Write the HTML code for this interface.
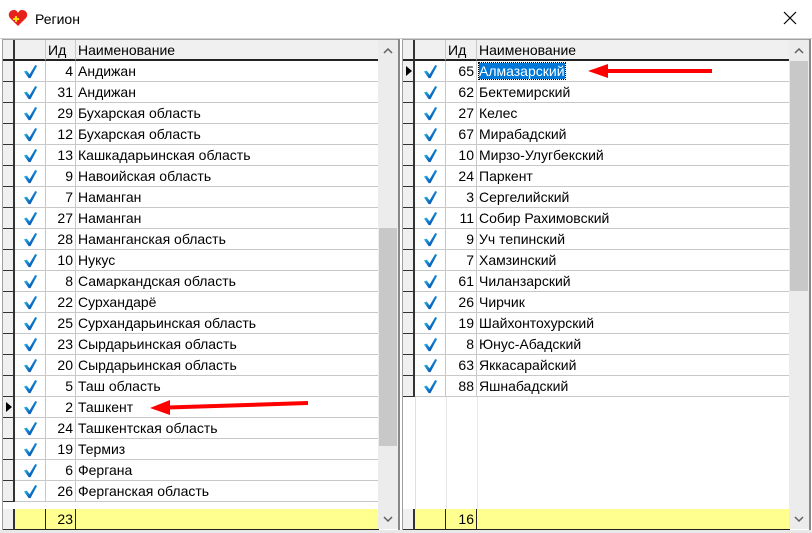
<!DOCTYPE html><html><head><meta charset="utf-8"><style>
body{margin:0;width:812px;height:533px;background:#fff;position:relative;overflow:hidden;font-family:"Liberation Sans",Arial,sans-serif;font-size:14px;color:#000}
.a{position:absolute}
.g{position:absolute;top:39px;height:491px;background:#fff;border-left:1px solid #a0a0a0;border-top:1px solid #a0a0a0}
.r{position:absolute;left:0;height:21px;display:flex}
.r>div{box-sizing:border-box;height:21px;line-height:21px;border-right:1px solid #c8c8c8;border-bottom:1px solid #c8c8c8;white-space:nowrap;overflow:hidden}
.r>.i{width:12px;background:#f0f0f0;border-right:2px solid #333;border-bottom:1px solid #333;position:relative}
.r>.c{width:31px;position:relative}
.r>.d{width:30px;text-align:right;padding-right:2px}
.r>.n{padding-left:2px}
.h>div{background:#f0f0f0;border-bottom:2px solid #222;line-height:20px}
.h>.d{text-align:left;padding-left:2px}
.f>div{background:#ffff90;border-bottom:1px solid #222;border-right:1px solid #222}
.sb{position:absolute;width:20px;background:#ececec;top:40px;height:489px}
.th{position:absolute;left:1px;width:18px;background:#c8c8c8}
.chk{position:absolute;left:8px;top:3px}
.tri{position:absolute;left:3px;top:5px;width:0;height:0;border-left:6px solid #000;border-top:5px solid transparent;border-bottom:5px solid transparent}
</style></head><body>
<svg class="a" style="left:8px;top:9px" width="20" height="18" viewBox="0 0 20 18"><path d="M10 17 L2 9 C-1 5 2 1 6 1 C8 1 9 2 10 4 C11 2 12 1 14 1 C18 1 21 5 18 9 Z" fill="#e8201c"/><path d="M5 10h6M8 7v6" stroke="#ffe000" stroke-width="2"/></svg>
<div class="a" style="left:35px;top:11px;font-size:14px">Регион</div>
<svg class="a" style="left:783px;top:11px" width="14" height="14"><path d="M1 1L13 13M13 1L1 13" stroke="#000" stroke-width="1.2"/></svg>
<div class="a" style="left:0;top:38px;width:812px;height:1px;background:#d0d0d0"></div>

<svg width="0" height="0" style="position:absolute"><defs><linearGradient id="cg" x1="0" y1="0" x2="1" y2="1"><stop offset="0" stop-color="#50e0f8"/><stop offset="0.5" stop-color="#1080d0"/><stop offset="1" stop-color="#082c90"/></linearGradient><symbol id="ck" viewBox="0 0 16 16"><path d="M1 8 L4 7 L7 11 L13 1 L15 2 L8 15 L6 15 Z" fill="url(#cg)"/></symbol></defs></svg>

<!-- LEFT GRID -->
<div class="g" style="left:2px;width:396px">
<div class="r h" style="top:0"><div class="i" style="border-bottom:2px solid #222"></div><div class="c"></div><div class="d">Ид</div><div class="n" style="width:303px">Наименование</div></div>
<div class="r" style="top:21px"><div class="i"></div><div class="c"><svg class="chk" width="15" height="15"><use href="#ck"/></svg></div><div class="d">4</div><div class="n" style="width:303px">Андижан</div></div>
<div class="r" style="top:42px"><div class="i"></div><div class="c"><svg class="chk" width="15" height="15"><use href="#ck"/></svg></div><div class="d">31</div><div class="n" style="width:303px">Андижан</div></div>
<div class="r" style="top:63px"><div class="i"></div><div class="c"><svg class="chk" width="15" height="15"><use href="#ck"/></svg></div><div class="d">29</div><div class="n" style="width:303px">Бухарская область</div></div>
<div class="r" style="top:84px"><div class="i"></div><div class="c"><svg class="chk" width="15" height="15"><use href="#ck"/></svg></div><div class="d">12</div><div class="n" style="width:303px">Бухарская область</div></div>
<div class="r" style="top:105px"><div class="i"></div><div class="c"><svg class="chk" width="15" height="15"><use href="#ck"/></svg></div><div class="d">13</div><div class="n" style="width:303px">Кашкадарьинская область</div></div>
<div class="r" style="top:126px"><div class="i"></div><div class="c"><svg class="chk" width="15" height="15"><use href="#ck"/></svg></div><div class="d">9</div><div class="n" style="width:303px">Навоийская область</div></div>
<div class="r" style="top:147px"><div class="i"></div><div class="c"><svg class="chk" width="15" height="15"><use href="#ck"/></svg></div><div class="d">7</div><div class="n" style="width:303px">Наманган</div></div>
<div class="r" style="top:168px"><div class="i"></div><div class="c"><svg class="chk" width="15" height="15"><use href="#ck"/></svg></div><div class="d">27</div><div class="n" style="width:303px">Наманган</div></div>
<div class="r" style="top:189px"><div class="i"></div><div class="c"><svg class="chk" width="15" height="15"><use href="#ck"/></svg></div><div class="d">28</div><div class="n" style="width:303px">Наманганская область</div></div>
<div class="r" style="top:210px"><div class="i"></div><div class="c"><svg class="chk" width="15" height="15"><use href="#ck"/></svg></div><div class="d">10</div><div class="n" style="width:303px">Нукус</div></div>
<div class="r" style="top:231px"><div class="i"></div><div class="c"><svg class="chk" width="15" height="15"><use href="#ck"/></svg></div><div class="d">8</div><div class="n" style="width:303px">Самаркандская область</div></div>
<div class="r" style="top:252px"><div class="i"></div><div class="c"><svg class="chk" width="15" height="15"><use href="#ck"/></svg></div><div class="d">22</div><div class="n" style="width:303px">Сурхандарё</div></div>
<div class="r" style="top:273px"><div class="i"></div><div class="c"><svg class="chk" width="15" height="15"><use href="#ck"/></svg></div><div class="d">25</div><div class="n" style="width:303px">Сурхандарьинская область</div></div>
<div class="r" style="top:294px"><div class="i"></div><div class="c"><svg class="chk" width="15" height="15"><use href="#ck"/></svg></div><div class="d">23</div><div class="n" style="width:303px">Сырдарьинская область</div></div>
<div class="r" style="top:315px"><div class="i"></div><div class="c"><svg class="chk" width="15" height="15"><use href="#ck"/></svg></div><div class="d">20</div><div class="n" style="width:303px">Сырдарьинская область</div></div>
<div class="r" style="top:336px"><div class="i"></div><div class="c"><svg class="chk" width="15" height="15"><use href="#ck"/></svg></div><div class="d">5</div><div class="n" style="width:303px">Таш область</div></div>
<div class="r" style="top:357px"><div class="i"><div class="tri"></div></div><div class="c"><svg class="chk" width="15" height="15"><use href="#ck"/></svg></div><div class="d">2</div><div class="n" style="width:303px">Ташкент</div></div>
<div class="r" style="top:378px"><div class="i"></div><div class="c"><svg class="chk" width="15" height="15"><use href="#ck"/></svg></div><div class="d">24</div><div class="n" style="width:303px">Ташкентская область</div></div>
<div class="r" style="top:399px"><div class="i"></div><div class="c"><svg class="chk" width="15" height="15"><use href="#ck"/></svg></div><div class="d">19</div><div class="n" style="width:303px">Термиз</div></div>
<div class="r" style="top:420px"><div class="i"></div><div class="c"><svg class="chk" width="15" height="15"><use href="#ck"/></svg></div><div class="d">6</div><div class="n" style="width:303px">Фергана</div></div>
<div class="r" style="top:441px"><div class="i"></div><div class="c"><svg class="chk" width="15" height="15"><use href="#ck"/></svg></div><div class="d">26</div><div class="n" style="width:303px">Ферганская область</div></div>
<div class="r f" style="top:469px"><div class="i" style="background:#f0f0f0"></div><div class="c"></div><div class="d">23</div><div class="n" style="width:303px"></div></div>
</div>
<div class="sb" style="left:378px"><svg class="a" style="left:5px;top:8px" width="10" height="6"><path d="M1 5L5 1L9 5" stroke="#606060" stroke-width="1.5" fill="none"/></svg><div class="th" style="top:188px;height:218px"></div><svg class="a" style="left:5px;top:476px" width="10" height="6"><path d="M1 1L5 5L9 1" stroke="#606060" stroke-width="1.5" fill="none"/></svg></div>
<div class="a" style="left:398px;top:39px;width:2px;height:491px;background:#888"></div>

<!-- RIGHT GRID -->
<div class="g" style="left:402px;width:408px">
<div class="a" style="left:12px;top:357px;width:1px;height:112px;background:#e0e0e0"></div>
<div class="a" style="left:43px;top:357px;width:1px;height:112px;background:#e8e8e8"></div>
<div class="a" style="left:74px;top:357px;width:1px;height:112px;background:#e8e8e8"></div>
<div class="r h" style="top:0"><div class="i" style="border-bottom:2px solid #222"></div><div class="c"></div><div class="d" style="width:31px">Ид</div><div class="n" style="width:313px">Наименование</div></div>
<div class="r" style="top:21px"><div class="i"><div class="tri"></div></div><div class="c"><svg class="chk" width="15" height="15"><use href="#ck"/></svg></div><div class="d" style="width:31px">65</div><div class="n" style="width:313px"><span style="background:#0078d7;color:#fff;outline:1px dotted #000">Алмазарский</span></div></div>
<div class="r" style="top:42px"><div class="i"></div><div class="c"><svg class="chk" width="15" height="15"><use href="#ck"/></svg></div><div class="d" style="width:31px">62</div><div class="n" style="width:313px">Бектемирский</div></div>
<div class="r" style="top:63px"><div class="i"></div><div class="c"><svg class="chk" width="15" height="15"><use href="#ck"/></svg></div><div class="d" style="width:31px">27</div><div class="n" style="width:313px">Келес</div></div>
<div class="r" style="top:84px"><div class="i"></div><div class="c"><svg class="chk" width="15" height="15"><use href="#ck"/></svg></div><div class="d" style="width:31px">67</div><div class="n" style="width:313px">Мирабадский</div></div>
<div class="r" style="top:105px"><div class="i"></div><div class="c"><svg class="chk" width="15" height="15"><use href="#ck"/></svg></div><div class="d" style="width:31px">10</div><div class="n" style="width:313px">Мирзо-Улугбекский</div></div>
<div class="r" style="top:126px"><div class="i"></div><div class="c"><svg class="chk" width="15" height="15"><use href="#ck"/></svg></div><div class="d" style="width:31px">24</div><div class="n" style="width:313px">Паркент</div></div>
<div class="r" style="top:147px"><div class="i"></div><div class="c"><svg class="chk" width="15" height="15"><use href="#ck"/></svg></div><div class="d" style="width:31px">3</div><div class="n" style="width:313px">Сергелийский</div></div>
<div class="r" style="top:168px"><div class="i"></div><div class="c"><svg class="chk" width="15" height="15"><use href="#ck"/></svg></div><div class="d" style="width:31px">11</div><div class="n" style="width:313px">Собир Рахимовский</div></div>
<div class="r" style="top:189px"><div class="i"></div><div class="c"><svg class="chk" width="15" height="15"><use href="#ck"/></svg></div><div class="d" style="width:31px">9</div><div class="n" style="width:313px">Уч тепинский</div></div>
<div class="r" style="top:210px"><div class="i"></div><div class="c"><svg class="chk" width="15" height="15"><use href="#ck"/></svg></div><div class="d" style="width:31px">7</div><div class="n" style="width:313px">Хамзинский</div></div>
<div class="r" style="top:231px"><div class="i"></div><div class="c"><svg class="chk" width="15" height="15"><use href="#ck"/></svg></div><div class="d" style="width:31px">61</div><div class="n" style="width:313px">Чиланзарский</div></div>
<div class="r" style="top:252px"><div class="i"></div><div class="c"><svg class="chk" width="15" height="15"><use href="#ck"/></svg></div><div class="d" style="width:31px">26</div><div class="n" style="width:313px">Чирчик</div></div>
<div class="r" style="top:273px"><div class="i"></div><div class="c"><svg class="chk" width="15" height="15"><use href="#ck"/></svg></div><div class="d" style="width:31px">19</div><div class="n" style="width:313px">Шайхонтохурский</div></div>
<div class="r" style="top:294px"><div class="i"></div><div class="c"><svg class="chk" width="15" height="15"><use href="#ck"/></svg></div><div class="d" style="width:31px">8</div><div class="n" style="width:313px">Юнус-Абадский</div></div>
<div class="r" style="top:315px"><div class="i"></div><div class="c"><svg class="chk" width="15" height="15"><use href="#ck"/></svg></div><div class="d" style="width:31px">63</div><div class="n" style="width:313px">Яккасарайский</div></div>
<div class="r" style="top:336px"><div class="i"></div><div class="c"><svg class="chk" width="15" height="15"><use href="#ck"/></svg></div><div class="d" style="width:31px">88</div><div class="n" style="width:313px">Яшнабадский</div></div>
<div class="r f" style="top:469px"><div class="i" style="background:#f0f0f0"></div><div class="c"></div><div class="d" style="width:31px">16</div><div class="n" style="width:313px"></div></div>
</div>
<div class="sb" style="left:789px"><svg class="a" style="left:5px;top:8px" width="10" height="6"><path d="M1 5L5 1L9 5" stroke="#606060" stroke-width="1.5" fill="none"/></svg><div class="th" style="top:21px;height:230px"></div><svg class="a" style="left:5px;top:476px" width="10" height="6"><path d="M1 1L5 5L9 1" stroke="#606060" stroke-width="1.5" fill="none"/></svg></div>
<div class="a" style="left:809px;top:39px;width:2px;height:491px;background:#888"></div>
<div class="a" style="left:0;top:530px;width:812px;height:3px;background:#e8e8e8"></div>

<svg class="a" style="left:0;top:0" width="812" height="533"><path d="M308 403 L168 407.5" stroke="#f00" stroke-width="4"/><path d="M150 408 L170 400 L170 415 Z" fill="#f00"/><path d="M712 71 L606 71" stroke="#f00" stroke-width="4"/><path d="M588 71 L608 64 L608 78 Z" fill="#f00"/></svg>
</body></html>
